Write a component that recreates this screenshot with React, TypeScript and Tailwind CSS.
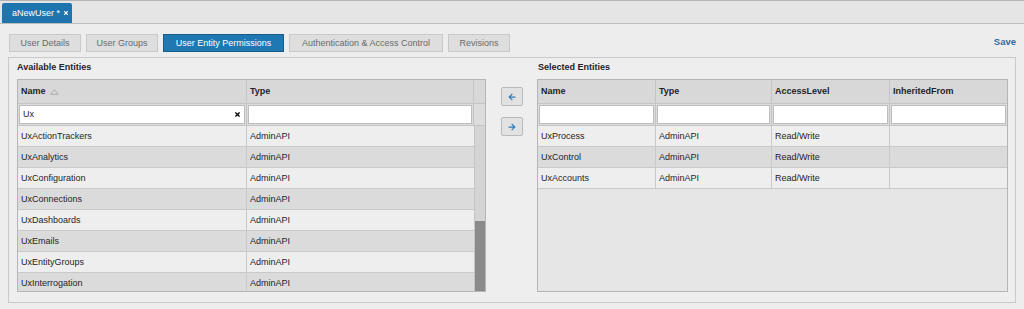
import { FaArrowLeft, FaArrowRight, FaTimes } from 'react-icons/fa'

const available = [
  'UxActionTrackers',
  'UxAnalytics',
  'UxConfiguration',
  'UxConnections',
  'UxDashboards',
  'UxEmails',
  'UxEntityGroups',
  'UxInterrogation',
]

const selected = ['UxProcess', 'UxControl', 'UxAccounts']

const tabs = [
  { label: 'User Details', w: 'w-[72px]' },
  { label: 'User Groups', w: 'w-[72px]' },
  { label: 'User Entity Permissions', w: 'w-[121px]' },
  { label: 'Authentication & Access Control', w: 'w-[154px]' },
  { label: 'Revisions', w: 'w-[62px]' },
]

function SortIcon() {
  return (
    <svg width="9" height="6" viewBox="0 0 9 6" className="ml-[4px]">
      <path d="M4.5 0.8 L8.2 5.3 L0.8 5.3 Z" fill="none" stroke="#a8a8a8" strokeWidth="0.9" />
    </svg>
  )
}

export default function App() {
  return (
    <div className="w-[1024px] h-[309px] bg-[#ededed] text-[9px] leading-none text-[#1f2329] overflow-hidden" style={{ fontFamily: '"Liberation Sans", Arial, sans-serif' }}>
      {/* document tab strip */}
      <div className="h-[24px] bg-[#e5e5e5] border-t border-[#b4b4b4] border-b border-b-[#bdbdbd] flex items-end pl-[2px]">
        <div className="h-[20px] w-[70px] pl-[10px] bg-[#1e74ae] text-white flex items-center gap-[3px] rounded-t-[2px]">
          <span>aNewUser *</span>
          <FaTimes className="w-[6px] h-[6px]" />
        </div>
      </div>

      {/* sub tabs */}
      <div className="flex items-center h-[18px] mt-[10px] pl-[9px] pr-[8px]">
        <div className="flex gap-[5px]">
          {tabs.map((t, i) => (
            <div
              key={t.label}
              className={
                i === 2
                  ? `${t.w} h-[18px] flex items-center justify-center bg-[#1f78b2] border border-[#175d8a] text-white`
                  : `${t.w} h-[18px] flex items-center justify-center bg-[#dedede] border border-[#c9c9c9] text-[#6a6a6a]`
              }
            >
              {t.label}
            </div>
          ))}
        </div>
        <div className="ml-auto text-[#2d6ea6] font-bold text-[9.5px] -mt-[3px]">Save</div>
      </div>

      {/* main panel */}
      <div className="mx-[8px] mt-[5px] h-[246px] border border-[#c9c9c9] bg-[#eeeeee] flex pl-[8px]">
        {/* available */}
        <div className="w-[469px]">
          <div className="font-bold h-[21px] pt-[5px]">Available Entities</div>
          <div className="h-[213px] border border-[#b5b5b5] overflow-hidden">
            <div className="flex h-[24px] bg-[#d8d8d8] border-b border-[#c4c4c4] font-bold">
              <div className="w-[229px] border-r border-[#c4c4c4] flex items-center pl-[3px]">
                Name <SortIcon />
              </div>
              <div className="w-[227px] border-r border-[#c4c4c4] flex items-center pl-[3px]">Type</div>
              <div className="flex-1" />
            </div>
            <div className="flex h-[22px] bg-[#dcdcdc] border-b border-[#c4c4c4]">
              <div className="w-[229px] border-r border-[#c4c4c4] p-[1px]">
                <div className="h-full bg-white border border-[#bdbdbd] flex items-center px-[3px]">
                  <span>Ux</span>
                  <FaTimes className="ml-auto w-[7px] h-[7px] text-black" />
                </div>
              </div>
              <div className="w-[227px] border-r border-[#c4c4c4] p-[1px]">
                <div className="h-full bg-white border border-[#bdbdbd]" />
              </div>
              <div className="flex-1" />
            </div>
            <div className="flex">
              <div className="w-[456px]">
                {available.map((name, i) => (
                  <div key={name} className={`flex h-[21px] border-b border-[#c9c9c9] ${i % 2 === 0 ? 'bg-[#eeeeee]' : 'bg-[#dbdbdb]'}`}>
                    <div className="w-[229px] border-r border-[#c9c9c9] flex items-center pl-[3px]">{name}</div>
                    <div className="flex-1 flex items-center pl-[3px]">AdminAPI</div>
                  </div>
                ))}
              </div>
              <div className="flex-1 border-l border-[#c4c4c4] flex flex-col">
                <div className="h-[95px] bg-[#d4d4d4]" />
                <div className="h-[73px] bg-[#8a8a8a]" />
              </div>
            </div>
          </div>
        </div>

        {/* move buttons */}
        <div className="w-[51px] flex flex-col items-center pt-[29px] gap-[11px]">
          <div className="w-[22px] h-[19px] bg-[#e2e2e2] border border-[#b9b9b9] rounded-[2px] flex items-center justify-center">
            <FaArrowLeft className="w-[8px] h-[8px] text-[#2b7bb9]" />
          </div>
          <div className="w-[22px] h-[19px] bg-[#e2e2e2] border border-[#b9b9b9] rounded-[2px] flex items-center justify-center">
            <FaArrowRight className="w-[8px] h-[8px] text-[#2b7bb9]" />
          </div>
        </div>

        {/* selected */}
        <div className="w-[471px]">
          <div className="font-bold h-[21px] pt-[5px] pl-[1px]">Selected Entities</div>
          <div className="h-[213px] border border-[#b5b5b5] bg-[#e6e6e6] overflow-hidden">
            <div className="flex h-[24px] bg-[#d8d8d8] border-b border-[#c4c4c4] font-bold">
              <div className="w-[118px] border-r border-[#c4c4c4] flex items-center pl-[3px]">Name</div>
              <div className="w-[116px] border-r border-[#c4c4c4] flex items-center pl-[3px]">Type</div>
              <div className="w-[118px] border-r border-[#c4c4c4] flex items-center pl-[3px]">AccessLevel</div>
              <div className="flex-1 flex items-center pl-[3px]">InheritedFrom</div>
            </div>
            <div className="flex h-[22px] bg-[#dcdcdc] border-b border-[#c4c4c4]">
              {[118, 116, 118].map((w, i) => (
                <div key={i} className="border-r border-[#c4c4c4] p-[1px]" style={{ width: w }}>
                  <div className="h-full bg-white border border-[#bdbdbd]" />
                </div>
              ))}
              <div className="flex-1 p-[1px]">
                <div className="h-full bg-white border border-[#bdbdbd]" />
              </div>
            </div>
            {selected.map((name, i) => (
              <div key={name} className={`flex h-[21px] border-b border-[#c9c9c9] ${i % 2 === 0 ? 'bg-[#eeeeee]' : 'bg-[#dbdbdb]'}`}>
                <div className="w-[118px] border-r border-[#c9c9c9] flex items-center pl-[3px]">{name}</div>
                <div className="w-[116px] border-r border-[#c9c9c9] flex items-center pl-[3px]">AdminAPI</div>
                <div className="w-[118px] border-r border-[#c9c9c9] flex items-center pl-[3px]">Read/Write</div>
                <div className="flex-1" />
              </div>
            ))}
          </div>
        </div>
      </div>
    </div>
  )
}
